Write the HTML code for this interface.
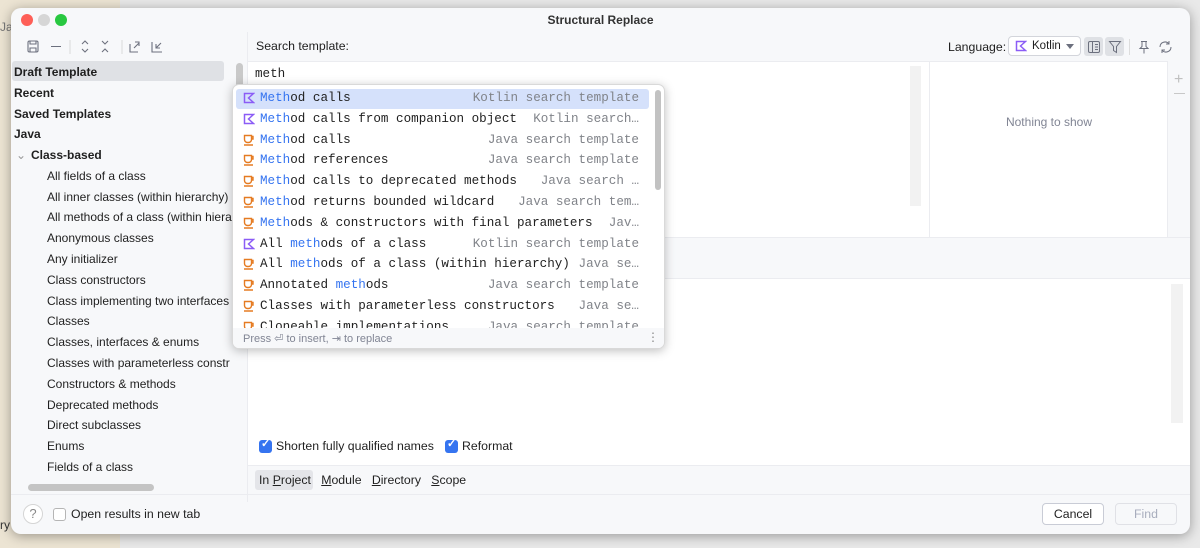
<!DOCTYPE html>
<html><head><meta charset="utf-8"><style>
*{margin:0;padding:0;box-sizing:border-box}
body{width:1200px;height:548px;overflow:hidden;position:relative;background:#e9e9e9;font-family:"Liberation Sans",sans-serif;font-size:12.3px;color:#1f1f1f}
.a{position:absolute}
.win{left:11px;top:8px;width:1179px;height:526px;background:#f7f8fa;border-radius:10px;box-shadow:0 2px 12px rgba(0,0,0,.35);overflow:hidden}
.tree div{position:absolute;white-space:nowrap;font-size:12px}
.b{font-weight:bold}
.pop{left:232px;top:84px;width:433px;height:265px;background:#fff;border-radius:7px;box-shadow:0 2px 10px rgba(0,0,0,.25);border:1px solid #d9d9d9;overflow:hidden}
.row{position:absolute;left:4px;width:413px;height:21px;font-family:"Liberation Mono",monospace;font-size:12.6px;line-height:21px;white-space:nowrap;color:#1f1f1f}
.row .ic{position:absolute;left:6px;top:4px;width:12px;height:12px}
.row .t{position:absolute;left:23px}
.row .r{position:absolute;right:11px;color:#808389}
.h{color:#3574f0}
.cb{width:13px;height:13px;border-radius:3px;background:#3574f0}
</style></head><body>
<div class="a" style="left:0;top:0;width:120px;height:548px;background:#ece4d3"></div>
<div class="a" style="left:0;top:20px;font-size:12px;color:#777">Ja</div>
<div class="a" style="left:0;top:518px;font-size:12px;color:#333">ry</div>
<div class="a win">
 <div class="a" style="left:10px;top:6px;width:12px;height:12px;border-radius:50%;background:#fe5f57"></div>
 <div class="a" style="left:27px;top:6px;width:12px;height:12px;border-radius:50%;background:#d6d6d6"></div>
 <div class="a" style="left:44px;top:6px;width:12px;height:12px;border-radius:50%;background:#28c840"></div>
 <div class="a b" style="left:0;width:1179px;top:5px;text-align:center;font-size:12px;color:#333">Structural Replace</div>
 <svg class="a" style="left:14px;top:30px" width="160" height="18" fill="none" stroke="#6c707e" stroke-width="1.1">
  <rect x="3" y="3" width="10" height="11" rx="1.5"/><path d="M5 3v3h6V3M5 14v-4h6v4"/>
  <path d="M26 8.5h10"/><path d="M45 2v14" stroke="#ddd"/>
  <path d="M57 6l3-3 3 3M57 11l3 3 3-3"/><path d="M77 3l3 3 3-3M77 14l3-3 3 3"/>
  <path d="M97 2v14" stroke="#ddd"/>
  <path d="M105 6v8h8M109 10l5-5M110 4h4v4"/><path d="M127 4v10h10M131 10l5-5M131 6v4h4"/>
 </svg>
 <div class="a" style="left:236px;top:24px;width:1px;height:470px;background:#ebecf0"></div>
 <div class="a" style="left:1px;top:53px;width:212px;height:20px;background:#dfe1e5;border-radius:3px"></div>
 <div class="a" style="left:225px;top:55px;width:7px;height:26px;background:#c9c9c9;border-radius:4px"></div>
 <div class="tree">
  <div class="b" style="left:3px;top:57px">Draft Template</div>
  <div class="b" style="left:3px;top:78px">Recent</div>
  <div class="b" style="left:3px;top:99px">Saved Templates</div>
  <div class="b" style="left:3px;top:119px">Java</div>
  <div style="left:5px;top:140px;color:#999">⌄</div>
  <div class="b" style="left:20px;top:140px">Class-based</div>
  <div style="left:36px;top:161px">All fields of a class</div>
  <div style="left:36px;top:182px">All inner classes (within hierarchy)</div>
  <div style="left:36px;top:202px">All methods of a class (within hiera</div>
  <div style="left:36px;top:223px">Anonymous classes</div>
  <div style="left:36px;top:244px">Any initializer</div>
  <div style="left:36px;top:265px">Class constructors</div>
  <div style="left:36px;top:286px">Class implementing two interfaces</div>
  <div style="left:36px;top:306px">Classes</div>
  <div style="left:36px;top:327px">Classes, interfaces &amp; enums</div>
  <div style="left:36px;top:348px">Classes with parameterless constr</div>
  <div style="left:36px;top:369px">Constructors &amp; methods</div>
  <div style="left:36px;top:390px">Deprecated methods</div>
  <div style="left:36px;top:410px">Direct subclasses</div>
  <div style="left:36px;top:431px">Enums</div>
  <div style="left:36px;top:452px">Fields of a class</div>
 </div>
 <div class="a" style="left:17px;top:476px;width:126px;height:7px;background:#c4c4c4;border-radius:4px"></div>
 <div class="a" style="left:245px;top:31px">Search template:</div>
 <div class="a" style="left:937px;top:32px">Language:</div>
 <div class="a" style="left:997px;top:28px;width:73px;height:20px;border:1px solid #d3d5db;border-radius:4px;background:#fff"></div>
 <svg class="a" style="left:1004px;top:32px" width="12" height="12"><path d="M1.5 1.5h9l-5 4.5 5 4.5h-9z" fill="none" stroke="#8b5cf6" stroke-width="1.5"/></svg>
 <div class="a" style="left:1021px;top:32px;font-size:11.5px">Kotlin</div>
 <div class="a" style="left:1055px;top:36px;border:4px solid transparent;border-top:5px solid #6c707e"></div>
 <div class="a" style="left:1073px;top:29px;width:19px;height:19px;background:#dfe1e5;border-radius:3px"></div>
 <svg class="a" style="left:1076px;top:32px" width="14" height="14" fill="none" stroke="#6c707e"><rect x="1.5" y="1.5" width="11" height="11" rx="1.5"/><path d="M5.5 1.5v11M8 4.5h3M8 7h3M8 9.5h3"/></svg>
 <div class="a" style="left:1094px;top:29px;width:19px;height:19px;background:#dfe1e5;border-radius:3px"></div>
 <svg class="a" style="left:1097px;top:32px" width="14" height="14" fill="none" stroke="#6c707e"><path d="M1.5 1.5h11l-4 5v6l-3-2v-4z"/></svg>
 <div class="a" style="left:1118px;top:31px;width:1px;height:16px;background:#ddd"></div>
 <svg class="a" style="left:1126px;top:32px" width="14" height="14" fill="none" stroke="#6c707e"><path d="M4 1.5h6M5 1.5v5l-2 2h8l-2-2v-5M7 8.5v5"/></svg>
 <svg class="a" style="left:1147px;top:32px" width="15" height="14" fill="none" stroke="#6c707e"><path d="M2 7a5 5 0 0 1 9-3M13 7a5 5 0 0 1-9 3M11 1v3h-3M4 13v-3h3"/></svg>
 <div class="a" style="left:237px;top:53px;width:942px;height:176px;background:#fff;border-top:1px solid #ebecf0"></div>
 <div class="a" style="left:244px;top:59px;font-family:'Liberation Mono',monospace;font-size:12.6px">meth</div>
 <div class="a" style="left:899px;top:58px;width:11px;height:140px;background:#f2f2f2"></div>
 <div class="a" style="left:918px;top:53px;width:1px;height:176px;background:#ebecf0"></div>
 <div class="a" style="left:918px;top:107px;width:240px;text-align:center;color:#818594;font-size:12px">Nothing to show</div>
 <div class="a" style="left:1156px;top:53px;width:1px;height:176px;background:#ebecf0"></div>
 <div class="a" style="left:1157px;top:53px;width:22px;height:176px;background:#f7f8fa"></div>
 <div class="a" style="left:1163px;top:63px;color:#c0c0c0;font-size:16px">+</div>
 <div class="a" style="left:1163px;top:85px;width:11px;height:1px;background:#c8c8c8"></div>
 <div class="a" style="left:237px;top:229px;width:942px;height:1px;background:#ebecf0"></div>
 <div class="a" style="left:237px;top:270px;width:942px;height:187px;background:#fff;border-top:1px solid #ebecf0"></div>
 <div class="a" style="left:1160px;top:276px;width:12px;height:139px;background:#f2f2f2"></div>
 <div class="a cb" style="left:248px;top:432px"></div>
 <div class="a" style="left:250px;top:429px;color:#fff;font-size:11px;font-weight:bold">✓</div>
 <div class="a" style="left:265px;top:431px">Shorten fully qualified names</div>
 <div class="a cb" style="left:434px;top:432px"></div>
 <div class="a" style="left:436px;top:429px;color:#fff;font-size:11px;font-weight:bold">✓</div>
 <div class="a" style="left:451px;top:431px">Reformat</div>
 <div class="a" style="left:237px;top:457px;width:942px;height:1px;background:#ebecf0"></div>
 <div class="a" style="left:244px;top:462px;width:58px;height:20px;background:#e4e5e9;border-radius:3px"></div>
 <div class="a" style="left:248px;top:465px">In <u>P</u>roject &nbsp;&nbsp;<u>M</u>odule &nbsp;&nbsp;<u>D</u>irectory &nbsp;&nbsp;<u>S</u>cope</div>
 <div class="a" style="left:0;top:486px;width:1179px;height:1px;background:#ebecf0"></div>
 <div class="a" style="left:12px;top:496px;width:20px;height:20px;border:1px solid #d5d5d5;border-radius:50%;background:#fff;text-align:center;font-size:13px;line-height:18px;color:#888">?</div>
 <div class="a" style="left:42px;top:500px;width:13px;height:13px;border:1px solid #b5b5b5;border-radius:3px;background:#fff"></div>
 <div class="a" style="left:60px;top:499px">Open results in new tab</div>
 <div class="a" style="left:1031px;top:495px;width:62px;height:22px;border:1px solid #c9ccd6;border-radius:4px;background:#fff;text-align:center;line-height:20px">Cancel</div>
 <div class="a" style="left:1104px;top:495px;width:62px;height:22px;border:1px solid #e0e1e6;border-radius:4px;background:#f7f8fa;text-align:center;line-height:20px;color:#a8adbd">Find</div>
</div>
<div class="a pop">
 <div class="a" style="left:3px;top:4px;width:413px;height:20px;background:#d5e1fb;border-radius:3px"></div>
 <div class="a" style="left:422px;top:5px;width:6px;height:100px;background:#c2c2c2;border-radius:3px"></div>
 <div id="rows"></div>
 <div class="a" style="left:0;top:243px;width:433px;height:22px;background:#f7f8fa"></div>
 <div class="a" style="left:10px;top:247px;font-size:11px;color:#818594">Press ⏎ to insert, ⇥ to replace</div>
 <div class="a" style="left:414px;top:245px;font-size:12px;color:#888">⋮</div>
</div>
<script>
var K='<svg class="ic" viewBox="0 0 12 12"><path d="M1.5 1.5h9l-5 4.5 5 4.5h-9z" fill="none" stroke="#8b5cf6" stroke-width="1.5"/></svg>';
var J='<svg class="ic" viewBox="0 0 12 12"><path d="M1.5 1.5h7v4a3 3 0 0 1-3 3h-1a3 3 0 0 1-3-3zM8.5 2.5h1.5v2.5h-1.5M1 11h9" fill="none" stroke="#e57b22" stroke-width="1.4"/></svg>';
var d=[[K,'<span class=h>Meth</span>od calls','Kotlin search template'],
[K,'<span class=h>Meth</span>od calls from companion object','Kotlin search…'],
[J,'<span class=h>Meth</span>od calls','Java search template'],
[J,'<span class=h>Meth</span>od references','Java search template'],
[J,'<span class=h>Meth</span>od calls to deprecated methods','Java search …'],
[J,'<span class=h>Meth</span>od returns bounded wildcard','Java search tem…'],
[J,'<span class=h>Meth</span>ods &amp; constructors with final parameters','Jav…'],
[K,'All <span class=h>meth</span>ods of a class','Kotlin search template'],
[J,'All <span class=h>meth</span>ods of a class (within hierarchy)','Java se…'],
[J,'Annotated <span class=h>meth</span>ods','Java search template'],
[J,'Classes with parameterless constructors','Java se…'],
[J,'Cloneable implementations','Java search template']];
var h='';d.forEach(function(r,i){h+='<div class="row" style="top:'+(3+i*20.8)+'px">'+r[0]+'<span class="t">'+r[1]+'</span><span class="r">'+r[2]+'</span></div>'});
document.getElementById('rows').innerHTML=h;
</script>
</body></html>
